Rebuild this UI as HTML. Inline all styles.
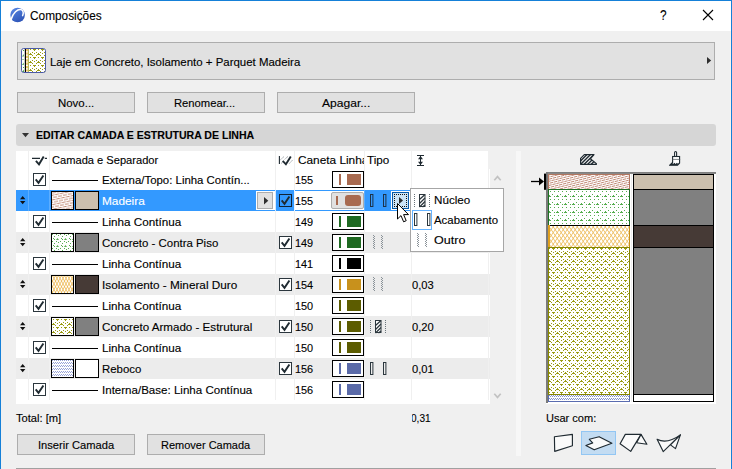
<!DOCTYPE html>
<html><head><meta charset="utf-8">
<style>
html,body{margin:0;padding:0;}
body{width:732px;height:469px;overflow:hidden;background:#f0f0f0;font-family:"Liberation Sans",sans-serif;font-size:12px;color:#000;position:relative;}
.a{position:absolute;}
.t{position:absolute;white-space:nowrap;line-height:14px;height:14px;display:inline-block;transform-origin:0 50%;-webkit-text-stroke:0.12px currentColor;}
.btn{position:absolute;box-sizing:border-box;background:#e1e1e1;border:1px solid #adadad;}
.sep{position:absolute;width:1px;background:#f0f0f0;top:151px;height:249px;}
.row{position:absolute;left:16px;width:474px;height:21px;}
.cb{position:absolute;box-sizing:border-box;width:13px;height:13px;border:1px solid #2b363d;background:#fff;}
.ln{position:absolute;left:52px;width:46px;height:1px;background:#000;}
.sw{position:absolute;box-sizing:border-box;width:24px;height:19px;border:1px solid #000;overflow:hidden;}
.pen{position:absolute;box-sizing:border-box;left:332px;width:32px;height:17px;border:1px solid #000;background:#fff;}
.pen i{position:absolute;left:6px;top:2px;width:2px;height:11px;}
.pen b{position:absolute;left:14px;top:2px;width:14px;height:11px;}
svg{position:absolute;overflow:visible;}
</style></head><body>
<div class="a" style="left:0;top:0;width:732px;height:31px;background:#fff;"></div>
<div class="a" style="left:0;top:0;width:732px;height:1px;background:#1580d8;"></div>
<div class="a" style="left:0;top:0;width:1px;height:469px;background:#1580d8;"></div>
<div class="a" style="left:731px;top:0;width:1px;height:469px;background:#1580d8;"></div>
<div class="a" style="left:730px;top:31px;width:1px;height:438px;background:#f7f4ef;"></div>
<div class="a" style="left:16px;top:468px;width:700px;height:1px;background:#a0a0a0;"></div>
<svg style="left:10px;top:7px" width="16" height="16" viewBox="0 0 16 16"><defs><linearGradient id="ig" x1="0" y1="0" x2="0.6" y2="1"><stop offset="0" stop-color="#5a8ae6"/><stop offset="1" stop-color="#2f56b8"/></linearGradient></defs><circle cx="7.6" cy="8" r="7.3" fill="url(#ig)"/><path d="M1.2 12.2 C3 6 7.5 1.8 11.2 2.6 C13.6 3.4 13.6 6.5 12.6 8.6" fill="none" stroke="#fff" stroke-width="1.5" stroke-linecap="round"/></svg>
<svg style="left:703px;top:10px" width="10" height="10" viewBox="0 0 10 10"><path d="M0 0 L10 10 M10 0 L0 10" stroke="#000" stroke-width="1.1" fill="none"/></svg>
<div class="btn" style="left:17px;top:42px;width:698px;height:38px;"></div>
<svg style="left:21px;top:48px" width="25" height="25" viewBox="0 0 25 25"><rect x="0.5" y="0.5" width="24" height="24" rx="2" fill="#fff"/><rect x="8" y="1" width="16" height="23" fill="url(#p_olive_i)"/><g fill="#4ea64a"><path d="M1 8.5 L2.8 6 V8.5 Z M1 17 L2.8 14.5 V17 Z M1 24 L3 21.5 V24 Z"/><rect x="2" y="2" width="1" height="1"/><rect x="1.5" y="11" width="1" height="1"/><rect x="2" y="19" width="1" height="1"/></g><path d="M4.4 1 V24" stroke="#000" stroke-width="1.2"/><path d="M6 1 V24" stroke="#e8a62c" stroke-width="1.3" stroke-dasharray="2.2 1.2"/><path d="M7.4 1 V24" stroke="#9a9a16" stroke-width="0.8"/><rect x="0.5" y="0.5" width="24" height="24" rx="2.2" fill="none" stroke="#4a5ba6" stroke-width="1"/></svg>
<svg style="left:707px;top:57px" width="4.2" height="7" viewBox="0 0 4.2 7"><path d="M0 0 L4.2 3.5 L0 7 Z" fill="#2e2e2e"/></svg>
<div class="btn" style="left:17px;top:92px;width:118px;height:21px;"></div>
<div class="btn" style="left:147px;top:92px;width:118px;height:21px;"></div>
<div class="btn" style="left:277px;top:92px;width:138px;height:21px;"></div>
<div class="btn" style="left:17px;top:434px;width:118px;height:21px;"></div>
<div class="btn" style="left:147px;top:434px;width:118px;height:21px;"></div>
<div class="a" style="left:16px;top:124px;width:700px;height:22px;background:#d6d6d6;border-radius:3px;"></div>
<svg style="left:22px;top:133px" width="7" height="4" viewBox="0 0 7 4"><path d="M0 0 L7 0 L3.5 4.2 Z" fill="#333"/></svg>
<div class="a" style="left:16px;top:151px;width:474px;height:253px;background:#fff;"></div>
<div class="cb" style="left:33px;top:173px;"><svg style="left:1px;top:1px" width="9" height="9" viewBox="0 0 9 9"><path d="M0.7 4.4 L3.5 7.8 L8.4 0.4" fill="none" stroke="#1f2a31" stroke-width="1.9"/></svg></div>
<div class="ln" style="top:180px;"></div>
<div class="pen" style="top:171px;"><i style="background:#a86a50"></i><b style="background:#a86a50"></b></div>
<div class="row" style="top:190px;background:#3399ff;"></div>
<div class="a" style="left:295px;top:191px;width:69px;height:19px;background:#fff;"></div>
<svg style="left:20px;top:196px" width="5.4" height="8.2" viewBox="0 0 5.4 8.2"><path d="M0 3.3 L2.7 0 L5.4 3.3 Z M0 4.9 L2.7 8.2 L5.4 4.9 Z" fill="#111"/></svg>
<div class="sw" style="left:51px;top:191px;width:23px;background:#fff;"><svg style="left:0;top:0" width="21" height="17"><rect width="21" height="17" fill="url(#p_wood_s)"/></svg></div>
<div class="sw" style="left:75px;top:191px;background:#cbbfae;"></div>
<div class="cb" style="left:279px;top:194px;background:transparent;border-color:#123;"><svg style="left:1px;top:1px" width="9" height="9" viewBox="0 0 9 9"><path d="M0.7 4.4 L3.5 7.8 L8.4 0.4" fill="none" stroke="#1f2a31" stroke-width="1.9"/></svg></div>
<div class="a" style="left:256px;top:191px;width:19px;height:19px;background:#fff;"></div>
<div class="btn" style="left:257px;top:192px;width:16px;height:17px;"></div>
<svg style="left:264px;top:197px" width="4.3" height="7.4" viewBox="0 0 4.3 7.4"><path d="M0 0 L4.3 3.7 L0 7.4 Z" fill="#2e2e2e"/></svg>
<div class="btn" style="left:331px;top:192px;width:33px;height:17px;border-radius:2px;"><i class="a" style="left:4px;top:3px;width:2px;height:9px;background:#a86a50;"></i><b class="a" style="left:13px;top:2px;width:16px;height:11px;border-radius:3px;background:#a86a50;"></b></div>
<svg style="left:370px;top:194px" width="16" height="13" viewBox="0 0 16 13"><rect x="0.5" y="0.5" width="2.4" height="12" fill="none" stroke="#1d3349" stroke-width="1"/><rect x="13.5" y="0.5" width="2.4" height="12" fill="none" stroke="#1d3349" stroke-width="1"/></svg>
<div class="cb" style="left:33px;top:215px;"><svg style="left:1px;top:1px" width="9" height="9" viewBox="0 0 9 9"><path d="M0.7 4.4 L3.5 7.8 L8.4 0.4" fill="none" stroke="#1f2a31" stroke-width="1.9"/></svg></div>
<div class="ln" style="top:222px;"></div>
<div class="pen" style="top:213px;"><i style="background:#1f6a22"></i><b style="background:#1f6a22"></b></div>
<div class="row" style="top:232px;background:#ececec;"></div>
<svg style="left:20px;top:238px" width="5.4" height="8.2" viewBox="0 0 5.4 8.2"><path d="M0 3.3 L2.7 0 L5.4 3.3 Z M0 4.9 L2.7 8.2 L5.4 4.9 Z" fill="#111"/></svg>
<div class="sw" style="left:51px;top:233px;width:23px;background:#fff;"><svg style="left:0;top:0" width="21" height="17"><rect width="21" height="17" fill="url(#p_cgreen_s)"/></svg></div>
<div class="sw" style="left:75px;top:233px;background:#808080;"></div>
<div class="cb" style="left:279px;top:236px;"><svg style="left:1px;top:1px" width="9" height="9" viewBox="0 0 9 9"><path d="M0.7 4.4 L3.5 7.8 L8.4 0.4" fill="none" stroke="#1f2a31" stroke-width="1.9"/></svg></div>
<div class="pen" style="top:234px;"><i style="background:#1f6a22"></i><b style="background:#1f6a22"></b></div>
<svg style="left:370px;top:236px" width="16" height="14" viewBox="0 0 16 14"><g fill="#8a9298" shape-rendering="crispEdges"><rect x="3" y="-1" width="1" height="1"/><rect x="4" y="0" width="1" height="1"/><rect x="3" y="1" width="1" height="1"/><rect x="4" y="2" width="1" height="1"/><rect x="3" y="3" width="1" height="1"/><rect x="4" y="4" width="1" height="1"/><rect x="3" y="5" width="1" height="1"/><rect x="4" y="6" width="1" height="1"/><rect x="3" y="7" width="1" height="1"/><rect x="4" y="8" width="1" height="1"/><rect x="3" y="9" width="1" height="1"/><rect x="4" y="10" width="1" height="1"/><rect x="3" y="11" width="1" height="1"/><rect x="4" y="12" width="1" height="1"/><rect x="11" y="-1" width="1" height="1"/><rect x="12" y="0" width="1" height="1"/><rect x="11" y="1" width="1" height="1"/><rect x="12" y="2" width="1" height="1"/><rect x="11" y="3" width="1" height="1"/><rect x="12" y="4" width="1" height="1"/><rect x="11" y="5" width="1" height="1"/><rect x="12" y="6" width="1" height="1"/><rect x="11" y="7" width="1" height="1"/><rect x="12" y="8" width="1" height="1"/><rect x="11" y="9" width="1" height="1"/><rect x="12" y="10" width="1" height="1"/><rect x="11" y="11" width="1" height="1"/><rect x="12" y="12" width="1" height="1"/></g></svg>
<div class="cb" style="left:33px;top:257px;"><svg style="left:1px;top:1px" width="9" height="9" viewBox="0 0 9 9"><path d="M0.7 4.4 L3.5 7.8 L8.4 0.4" fill="none" stroke="#1f2a31" stroke-width="1.9"/></svg></div>
<div class="ln" style="top:264px;"></div>
<div class="pen" style="top:255px;"><i style="background:#000000"></i><b style="background:#000000"></b></div>
<div class="row" style="top:274px;background:#ececec;"></div>
<svg style="left:20px;top:280px" width="5.4" height="8.2" viewBox="0 0 5.4 8.2"><path d="M0 3.3 L2.7 0 L5.4 3.3 Z M0 4.9 L2.7 8.2 L5.4 4.9 Z" fill="#111"/></svg>
<div class="sw" style="left:51px;top:275px;width:23px;background:#fff;"><svg style="left:0;top:0" width="21" height="17"><path d="M-2.5 -0.5 L-1.0 2.3 L-2.5 5.1 L-1.0 7.9 L-2.5 10.7 L-1.0 13.5 L-2.5 16.3 L-1.0 19.1 M-2.5 -0.5 L-4.0 2.3 L-2.5 5.1 L-4.0 7.9 L-2.5 10.7 L-4.0 13.5 L-2.5 16.3 L-4.0 19.1 M0.5 -0.5 L2.0 2.3 L0.5 5.1 L2.0 7.9 L0.5 10.7 L2.0 13.5 L0.5 16.3 L2.0 19.1 M0.5 -0.5 L-1.0 2.3 L0.5 5.1 L-1.0 7.9 L0.5 10.7 L-1.0 13.5 L0.5 16.3 L-1.0 19.1 M3.5 -0.5 L5.0 2.3 L3.5 5.1 L5.0 7.9 L3.5 10.7 L5.0 13.5 L3.5 16.3 L5.0 19.1 M3.5 -0.5 L2.0 2.3 L3.5 5.1 L2.0 7.9 L3.5 10.7 L2.0 13.5 L3.5 16.3 L2.0 19.1 M6.5 -0.5 L8.0 2.3 L6.5 5.1 L8.0 7.9 L6.5 10.7 L8.0 13.5 L6.5 16.3 L8.0 19.1 M6.5 -0.5 L5.0 2.3 L6.5 5.1 L5.0 7.9 L6.5 10.7 L5.0 13.5 L6.5 16.3 L5.0 19.1 M9.5 -0.5 L11.0 2.3 L9.5 5.1 L11.0 7.9 L9.5 10.7 L11.0 13.5 L9.5 16.3 L11.0 19.1 M9.5 -0.5 L8.0 2.3 L9.5 5.1 L8.0 7.9 L9.5 10.7 L8.0 13.5 L9.5 16.3 L8.0 19.1 M12.5 -0.5 L14.0 2.3 L12.5 5.1 L14.0 7.9 L12.5 10.7 L14.0 13.5 L12.5 16.3 L14.0 19.1 M12.5 -0.5 L11.0 2.3 L12.5 5.1 L11.0 7.9 L12.5 10.7 L11.0 13.5 L12.5 16.3 L11.0 19.1 M15.5 -0.5 L17.0 2.3 L15.5 5.1 L17.0 7.9 L15.5 10.7 L17.0 13.5 L15.5 16.3 L17.0 19.1 M15.5 -0.5 L14.0 2.3 L15.5 5.1 L14.0 7.9 L15.5 10.7 L14.0 13.5 L15.5 16.3 L14.0 19.1 M18.5 -0.5 L20.0 2.3 L18.5 5.1 L20.0 7.9 L18.5 10.7 L20.0 13.5 L18.5 16.3 L20.0 19.1 M18.5 -0.5 L17.0 2.3 L18.5 5.1 L17.0 7.9 L18.5 10.7 L17.0 13.5 L18.5 16.3 L17.0 19.1 M21.5 -0.5 L23.0 2.3 L21.5 5.1 L23.0 7.9 L21.5 10.7 L23.0 13.5 L21.5 16.3 L23.0 19.1 M21.5 -0.5 L20.0 2.3 L21.5 5.1 L20.0 7.9 L21.5 10.7 L20.0 13.5 L21.5 16.3 L20.0 19.1 M24.5 -0.5 L26.0 2.3 L24.5 5.1 L26.0 7.9 L24.5 10.7 L26.0 13.5 L24.5 16.3 L26.0 19.1 M24.5 -0.5 L23.0 2.3 L24.5 5.1 L23.0 7.9 L24.5 10.7 L23.0 13.5 L24.5 16.3 L23.0 19.1 " stroke="#e6a018" stroke-width="0.6" fill="none"/></svg></div>
<div class="sw" style="left:75px;top:275px;background:#463a36;"></div>
<div class="cb" style="left:279px;top:278px;"><svg style="left:1px;top:1px" width="9" height="9" viewBox="0 0 9 9"><path d="M0.7 4.4 L3.5 7.8 L8.4 0.4" fill="none" stroke="#1f2a31" stroke-width="1.9"/></svg></div>
<div class="pen" style="top:276px;"><i style="background:#c8911c"></i><b style="background:#c8911c"></b></div>
<svg style="left:370px;top:278px" width="16" height="14" viewBox="0 0 16 14"><g fill="#8a9298" shape-rendering="crispEdges"><rect x="3" y="-1" width="1" height="1"/><rect x="4" y="0" width="1" height="1"/><rect x="3" y="1" width="1" height="1"/><rect x="4" y="2" width="1" height="1"/><rect x="3" y="3" width="1" height="1"/><rect x="4" y="4" width="1" height="1"/><rect x="3" y="5" width="1" height="1"/><rect x="4" y="6" width="1" height="1"/><rect x="3" y="7" width="1" height="1"/><rect x="4" y="8" width="1" height="1"/><rect x="3" y="9" width="1" height="1"/><rect x="4" y="10" width="1" height="1"/><rect x="3" y="11" width="1" height="1"/><rect x="4" y="12" width="1" height="1"/><rect x="11" y="-1" width="1" height="1"/><rect x="12" y="0" width="1" height="1"/><rect x="11" y="1" width="1" height="1"/><rect x="12" y="2" width="1" height="1"/><rect x="11" y="3" width="1" height="1"/><rect x="12" y="4" width="1" height="1"/><rect x="11" y="5" width="1" height="1"/><rect x="12" y="6" width="1" height="1"/><rect x="11" y="7" width="1" height="1"/><rect x="12" y="8" width="1" height="1"/><rect x="11" y="9" width="1" height="1"/><rect x="12" y="10" width="1" height="1"/><rect x="11" y="11" width="1" height="1"/><rect x="12" y="12" width="1" height="1"/></g></svg>
<div class="cb" style="left:33px;top:299px;"><svg style="left:1px;top:1px" width="9" height="9" viewBox="0 0 9 9"><path d="M0.7 4.4 L3.5 7.8 L8.4 0.4" fill="none" stroke="#1f2a31" stroke-width="1.9"/></svg></div>
<div class="ln" style="top:306px;"></div>
<div class="pen" style="top:297px;"><i style="background:#5c5c00"></i><b style="background:#5c5c00"></b></div>
<div class="row" style="top:316px;background:#ececec;"></div>
<svg style="left:20px;top:322px" width="5.4" height="8.2" viewBox="0 0 5.4 8.2"><path d="M0 3.3 L2.7 0 L5.4 3.3 Z M0 4.9 L2.7 8.2 L5.4 4.9 Z" fill="#111"/></svg>
<div class="sw" style="left:51px;top:317px;width:23px;background:#fff;"><svg style="left:0;top:0" width="21" height="17"><rect width="21" height="17" fill="url(#p_olive_s)"/></svg></div>
<div class="sw" style="left:75px;top:317px;background:#808080;"></div>
<div class="cb" style="left:279px;top:320px;"><svg style="left:1px;top:1px" width="9" height="9" viewBox="0 0 9 9"><path d="M0.7 4.4 L3.5 7.8 L8.4 0.4" fill="none" stroke="#1f2a31" stroke-width="1.9"/></svg></div>
<div class="pen" style="top:318px;"><i style="background:#5c5c00"></i><b style="background:#5c5c00"></b></div>
<svg style="left:370px;top:320px" width="16" height="13" viewBox="0 0 16 13"><path d="M0.5 0 V13 M15.5 0 V13" stroke="#6a747a" stroke-dasharray="1 1" fill="none"/><rect x="5.5" y="0.5" width="5.5" height="12" fill="#fff" stroke="#2b363d"/><path d="M5.5 5.5 L11 0.5 M5.5 9.5 L11 4 M5.5 13 L11 7.5 M8.5 13 L11 11" stroke="#2b363d" stroke-width="1.3" fill="none"/></svg>
<div class="cb" style="left:33px;top:341px;"><svg style="left:1px;top:1px" width="9" height="9" viewBox="0 0 9 9"><path d="M0.7 4.4 L3.5 7.8 L8.4 0.4" fill="none" stroke="#1f2a31" stroke-width="1.9"/></svg></div>
<div class="ln" style="top:348px;"></div>
<div class="pen" style="top:339px;"><i style="background:#5c5c00"></i><b style="background:#5c5c00"></b></div>
<div class="row" style="top:358px;background:#ececec;"></div>
<svg style="left:20px;top:364px" width="5.4" height="8.2" viewBox="0 0 5.4 8.2"><path d="M0 3.3 L2.7 0 L5.4 3.3 Z M0 4.9 L2.7 8.2 L5.4 4.9 Z" fill="#111"/></svg>
<div class="sw" style="left:51px;top:359px;width:23px;background:#fff;"><svg style="left:0;top:0" width="21" height="17"><rect width="21" height="17" fill="url(#p_bluedot_s)"/></svg></div>
<div class="sw" style="left:75px;top:359px;background:#ffffff;"></div>
<div class="cb" style="left:279px;top:362px;"><svg style="left:1px;top:1px" width="9" height="9" viewBox="0 0 9 9"><path d="M0.7 4.4 L3.5 7.8 L8.4 0.4" fill="none" stroke="#1f2a31" stroke-width="1.9"/></svg></div>
<div class="pen" style="top:360px;"><i style="background:#5a6aa8"></i><b style="background:#5a6aa8"></b></div>
<svg style="left:370px;top:362px" width="16" height="13" viewBox="0 0 16 13"><rect x="0.5" y="0.5" width="2.4" height="12" fill="none" stroke="#2b363d" stroke-width="1"/><rect x="13.5" y="0.5" width="2.4" height="12" fill="none" stroke="#2b363d" stroke-width="1"/></svg>
<div class="cb" style="left:33px;top:383px;"><svg style="left:1px;top:1px" width="9" height="9" viewBox="0 0 9 9"><path d="M0.7 4.4 L3.5 7.8 L8.4 0.4" fill="none" stroke="#1f2a31" stroke-width="1.9"/></svg></div>
<div class="ln" style="top:390px;"></div>
<div class="pen" style="top:381px;"><i style="background:#5a6aa8"></i><b style="background:#5a6aa8"></b></div>
<div class="a" style="left:488px;top:151px;width:2px;height:18px;background:#f0f0f0;"></div>
<div class="sep" style="left:28px;"></div>
<div class="sep" style="left:49px;"></div>
<div class="sep" style="left:275px;"></div>
<div class="sep" style="left:294px;"></div>
<div class="sep" style="left:364px;"></div>
<div class="sep" style="left:411px;"></div>
<div class="sep" style="left:488px;"></div>
<div class="a" style="left:28px;top:190px;width:1px;height:21px;background:#5badff;"></div>
<div class="a" style="left:49px;top:190px;width:1px;height:21px;background:#5badff;"></div>
<div class="a" style="left:275px;top:190px;width:1px;height:21px;background:#d4e9ff;"></div>
<div class="a" style="left:294px;top:190px;width:1px;height:21px;background:#eaf4ff;"></div>
<div class="a" style="left:364px;top:190px;width:1px;height:21px;background:#5badff;"></div>
<div class="a" style="left:295px;top:152px;width:69px;height:17px;overflow:hidden;"><span class="t" style="left:2.6px;top:1.4px;font-size:11px;transform:scaleX(1.075);">Caneta Linha</span></div>
<svg style="left:32px;top:154px" width="15" height="12" viewBox="0 0 15 12"><path d="M0 4.4 H8 M12.8 4.4 H15" stroke="#1f2a31" stroke-width="1.2" fill="none"/><path d="M3.9 6.9 L7 10.3 L11.7 2.4" fill="none" stroke="#1f2a31" stroke-width="1.9"/></svg>
<svg style="left:278px;top:154px" width="16" height="12" viewBox="0 0 16 12"><path d="M1.4 2 V10" stroke="#1f2a31" stroke-width="1.1"/><path d="M2.4 5.8 L6.2 2.4 M3.2 9.4 L5.2 7.6 M6.6 5.4 L10 2.4 M11.3 9.6 L14.8 5.8" stroke="#8d9499" stroke-width="0.9" stroke-dasharray="1.2 0.5" fill="none"/><path d="M4.7 6.9 L7.9 10.3 L12.8 2.4" fill="none" stroke="#1f2a31" stroke-width="1.9"/></svg>
<svg style="left:417px;top:155px" width="7" height="11" viewBox="0 0 7 11"><path d="M0 0.5 H7 M0 10.5 H7 M3.5 1 V10" stroke="#1f2a31" stroke-width="1" fill="none"/><path d="M3.5 1 L6 4.2 H1 Z M3.5 10 L6 6.8 H1 Z" fill="#1f2a31"/></svg>
<div class="a" style="left:391px;top:191px;width:19px;height:19px;box-sizing:border-box;background:#cce4f7;border:1px solid #fff;"></div>
<div class="a" style="left:392px;top:192px;width:17px;height:17px;box-sizing:border-box;background:#cce4f7;border:1px solid #0a5aa8;"></div>
<div class="a" style="left:394px;top:194px;width:13px;height:13px;box-sizing:border-box;border:1px dotted #111;"></div>
<svg style="left:399px;top:197px" width="4" height="7" viewBox="0 0 4 7"><path d="M0 0 L4 3.5 L0 7 Z" fill="#2a2a2a"/></svg>
<svg style="left:494px;top:175px" width="7" height="6" viewBox="0 0 7 6"><path d="M0.3 5.2 L3.5 1.6 L6.7 5.2" stroke="#c2c2c2" stroke-width="1.7" fill="none"/></svg>
<svg style="left:494px;top:393px" width="7" height="6" viewBox="0 0 7 6"><path d="M0.3 0.8 L3.5 4.4 L6.7 0.8" stroke="#c2c2c2" stroke-width="1.7" fill="none"/></svg>
<div class="a" style="left:410px;top:188px;width:94px;height:64px;box-sizing:border-box;background:#fff;border:1px solid #a6a6a6;"></div>
<div class="a" style="left:412px;top:210px;width:20px;height:20px;box-sizing:border-box;border:1px solid #66b3ff;background:#fff;"></div>
<svg style="left:414px;top:194px" width="16" height="13" viewBox="0 0 16 13"><path d="M0.5 0 V13 M15.5 0 V13" stroke="#6a747a" stroke-dasharray="1 1" fill="none"/><rect x="5.5" y="0.5" width="5.5" height="12" fill="#fff" stroke="#2b363d"/><path d="M5.5 5.5 L11 0.5 M5.5 9.5 L11 4 M5.5 13 L11 7.5 M8.5 13 L11 11" stroke="#2b363d" stroke-width="1.3" fill="none"/></svg>
<svg style="left:414px;top:213px" width="16" height="13" viewBox="0 0 16 13"><rect x="0.5" y="0.5" width="2.4" height="12" fill="none" stroke="#2b363d" stroke-width="1"/><rect x="13.5" y="0.5" width="2.4" height="12" fill="none" stroke="#2b363d" stroke-width="1"/></svg>
<svg style="left:414px;top:234px" width="16" height="14" viewBox="0 0 16 14"><g fill="#8a9298" shape-rendering="crispEdges"><rect x="3" y="-1" width="1" height="1"/><rect x="4" y="0" width="1" height="1"/><rect x="3" y="1" width="1" height="1"/><rect x="4" y="2" width="1" height="1"/><rect x="3" y="3" width="1" height="1"/><rect x="4" y="4" width="1" height="1"/><rect x="3" y="5" width="1" height="1"/><rect x="4" y="6" width="1" height="1"/><rect x="3" y="7" width="1" height="1"/><rect x="4" y="8" width="1" height="1"/><rect x="3" y="9" width="1" height="1"/><rect x="4" y="10" width="1" height="1"/><rect x="3" y="11" width="1" height="1"/><rect x="4" y="12" width="1" height="1"/><rect x="11" y="-1" width="1" height="1"/><rect x="12" y="0" width="1" height="1"/><rect x="11" y="1" width="1" height="1"/><rect x="12" y="2" width="1" height="1"/><rect x="11" y="3" width="1" height="1"/><rect x="12" y="4" width="1" height="1"/><rect x="11" y="5" width="1" height="1"/><rect x="12" y="6" width="1" height="1"/><rect x="11" y="7" width="1" height="1"/><rect x="12" y="8" width="1" height="1"/><rect x="11" y="9" width="1" height="1"/><rect x="12" y="10" width="1" height="1"/><rect x="11" y="11" width="1" height="1"/><rect x="12" y="12" width="1" height="1"/></g></svg>
<svg style="left:397px;top:203px" width="13" height="20" viewBox="0 0 13 20"><path d="M0.5 0.5 V16 L4 12.6 L6.6 18.8 L9.2 17.7 L6.6 11.6 H11.5 Z" fill="#fff" stroke="#000" stroke-width="1"/></svg>
<div class="a" style="left:412px;top:408px;width:30px;height:20px;overflow:hidden;"><span class="t" style="left:-1.5px;top:3.4px;font-size:11px;transform:scaleX(0.915);">0,31</span></div>
<div class="a" style="left:516px;top:151px;width:5px;height:305px;background:#f7f7f7;"></div>
<div class="a" style="left:546px;top:172px;width:170px;height:232px;background:#fff;"></div>
<div class="a" style="left:546px;top:172px;width:170px;height:2px;background:linear-gradient(#7a7a7a,#8c8c8c);"></div>
<div class="a" style="left:546px;top:172px;width:2px;height:231px;background:#7a7a7a;"></div>
<div class="a" style="left:631px;top:174px;width:1px;height:228px;background:#ededed;"></div>
<svg style="left:0;top:0" width="0" height="0"><defs>
<pattern id="p_wood" width="8" height="2" x="1" y="1" patternUnits="userSpaceOnUse"><g fill="#b5735a" shape-rendering="crispEdges"><rect x="0" y="1" width="3" height="1"/><rect x="4" y="0" width="3" height="1"/></g></pattern>
<pattern id="p_wood_s" width="10" height="4.6" patternUnits="userSpaceOnUse" patternTransform="rotate(-12)"><path d="M0 1 H4 M5 1 H9 M-2.5 3.3 H1.5 M2.5 3.3 H6.5 M7.5 3.3 H11.5" stroke="#b5735a" stroke-width="0.85"/></pattern>
<pattern id="p_cgreen" width="8" height="8" patternUnits="userSpaceOnUse"><g fill="#55ad4e" shape-rendering="crispEdges"><rect x="2" y="1" width="1" height="1"/><rect x="6" y="1" width="1" height="1"/><rect x="4" y="4" width="1" height="1"/><rect x="6" y="6" width="1" height="1"/><rect x="1" y="5" width="1" height="1"/><rect x="0" y="6" width="3" height="1"/></g></pattern>
<pattern id="p_cgreen_s" width="8" height="7" x="2" y="1" patternUnits="userSpaceOnUse"><g fill="#58ad50" shape-rendering="crispEdges"><path d="M2 5 L3.5 3 L5 5 Z" shape-rendering="auto"/><rect x="0" y="1" width="1" height="1"/><rect x="4" y="0" width="1" height="1"/><rect x="7" y="3" width="1" height="1"/><rect x="0" y="4" width="1" height="1"/><rect x="6" y="6" width="1" height="1"/><rect x="2" y="6" width="1" height="1"/></g></pattern>
<pattern id="p_orange" width="4" height="5.8" x="1.2" y="52.8" patternUnits="userSpaceOnUse"><path d="M0 0 L2 2.9 L0 5.8 M4 0 L2 2.9 L4 5.8" stroke="#e8a420" stroke-width="0.85" fill="none"/></pattern>
<pattern id="p_orange_s" width="3" height="5.6" patternUnits="userSpaceOnUse"><path d="M0 0 L1.5 2.8 L0 5.6 M3 0 L1.5 2.8 L3 5.6" stroke="#eaa21c" stroke-width="0.9" fill="none"/></pattern>
<pattern id="p_olive" width="8" height="8" patternUnits="userSpaceOnUse"><g fill="#9b9b12" shape-rendering="crispEdges"><rect x="4" y="2" width="3" height="1"/><rect x="5" y="3" width="1" height="1"/><rect x="1" y="2" width="1" height="1"/><rect x="3" y="5" width="1" height="1"/><rect x="7" y="5" width="1" height="1"/><rect x="1" y="6" width="1" height="1"/><rect x="0" y="7" width="3" height="1"/><rect x="5" y="6" width="1" height="1"/><rect x="3" y="0" width="1" height="1"/><rect x="7" y="0" width="1" height="1"/></g></pattern>
<pattern id="p_olive_s" width="8" height="8" x="0" y="-1" patternUnits="userSpaceOnUse"><g fill="#9b9b12" shape-rendering="crispEdges"><rect x="4" y="2" width="3" height="1"/><rect x="5" y="3" width="1" height="1"/><rect x="1" y="2" width="1" height="1"/><rect x="3" y="5" width="1" height="1"/><rect x="7" y="5" width="1" height="1"/><rect x="1" y="6" width="1" height="1"/><rect x="0" y="7" width="3" height="1"/><rect x="5" y="6" width="1" height="1"/><rect x="3" y="0" width="1" height="1"/><rect x="7" y="0" width="1" height="1"/></g></pattern>
<pattern id="p_olive_i" width="8" height="8" x="0" y="-1" patternUnits="userSpaceOnUse"><g fill="#9b9b12" shape-rendering="crispEdges"><rect x="4" y="2" width="3" height="1"/><rect x="5" y="3" width="1" height="1"/><rect x="1" y="2" width="1" height="1"/><rect x="3" y="5" width="1" height="1"/><rect x="7" y="5" width="1" height="1"/><rect x="1" y="6" width="1" height="1"/><rect x="0" y="7" width="3" height="1"/><rect x="5" y="6" width="1" height="1"/><rect x="3" y="0" width="1" height="1"/><rect x="7" y="0" width="1" height="1"/></g></pattern>
<pattern id="p_bluedot" width="2" height="3" x="0" y="222" patternUnits="userSpaceOnUse"><g shape-rendering="crispEdges" fill="#8592cc"><rect x="0" y="0" width="1" height="1"/><rect x="1" y="1.5" width="1" height="1"/></g></pattern>
<pattern id="p_bluedot_s" width="2" height="3" patternUnits="userSpaceOnUse"><g shape-rendering="crispEdges" fill="#97a3d8"><rect x="0" y="0" width="1" height="1"/><rect x="1" y="1.5" width="1" height="1"/></g></pattern>
</defs></svg>
<svg style="left:548px;top:174px" width="82" height="228" viewBox="0 0 82 228"><defs><clipPath id="wc"><rect x="1" y="1" width="80" height="14"/></clipPath></defs><g clip-path="url(#wc)" stroke="#b06a50" stroke-width="0.8" stroke-dasharray="3.4 0.7" fill="none"><path d="M0 1.20 L82 -19.30" stroke-dashoffset="0.00"/><path d="M0 3.30 L82 -17.20" stroke-dashoffset="1.55"/><path d="M0 5.40 L82 -15.10" stroke-dashoffset="3.10"/><path d="M0 7.50 L82 -13.00" stroke-dashoffset="0.55"/><path d="M0 9.60 L82 -10.90" stroke-dashoffset="2.10"/><path d="M0 11.70 L82 -8.80" stroke-dashoffset="3.65"/><path d="M0 13.80 L82 -6.70" stroke-dashoffset="1.10"/><path d="M0 15.90 L82 -4.60" stroke-dashoffset="2.65"/><path d="M0 18.00 L82 -2.50" stroke-dashoffset="0.10"/><path d="M0 20.10 L82 -0.40" stroke-dashoffset="1.65"/><path d="M0 22.20 L82 1.70" stroke-dashoffset="3.20"/><path d="M0 24.30 L82 3.80" stroke-dashoffset="0.65"/><path d="M0 26.40 L82 5.90" stroke-dashoffset="2.20"/><path d="M0 28.50 L82 8.00" stroke-dashoffset="3.75"/><path d="M0 30.60 L82 10.10" stroke-dashoffset="1.20"/><path d="M0 32.70 L82 12.20" stroke-dashoffset="2.75"/><path d="M0 34.80 L82 14.30" stroke-dashoffset="0.20"/><path d="M0 36.90 L82 16.40" stroke-dashoffset="1.75"/><path d="M0 39.00 L82 18.50" stroke-dashoffset="3.30"/></g><rect x="0" y="15" width="82" height="36" fill="url(#p_cgreen)"/><defs><clipPath id="oc"><rect x="2" y="52" width="79" height="21"/></clipPath></defs><g clip-path="url(#oc)"><path d="M-2.8 47.0 L-0.8 49.9 L-2.8 52.8 L-0.8 55.7 L-2.8 58.6 L-0.8 61.5 L-2.8 64.4 L-0.8 67.3 L-2.8 70.2 L-0.8 73.1 L-2.8 76.0 M-2.8 47.0 L-4.8 49.9 L-2.8 52.8 L-4.8 55.7 L-2.8 58.6 L-4.8 61.5 L-2.8 64.4 L-4.8 67.3 L-2.8 70.2 L-4.8 73.1 L-2.8 76.0 M1.2 47.0 L3.2 49.9 L1.2 52.8 L3.2 55.7 L1.2 58.6 L3.2 61.5 L1.2 64.4 L3.2 67.3 L1.2 70.2 L3.2 73.1 L1.2 76.0 M1.2 47.0 L-0.8 49.9 L1.2 52.8 L-0.8 55.7 L1.2 58.6 L-0.8 61.5 L1.2 64.4 L-0.8 67.3 L1.2 70.2 L-0.8 73.1 L1.2 76.0 M5.2 47.0 L7.2 49.9 L5.2 52.8 L7.2 55.7 L5.2 58.6 L7.2 61.5 L5.2 64.4 L7.2 67.3 L5.2 70.2 L7.2 73.1 L5.2 76.0 M5.2 47.0 L3.2 49.9 L5.2 52.8 L3.2 55.7 L5.2 58.6 L3.2 61.5 L5.2 64.4 L3.2 67.3 L5.2 70.2 L3.2 73.1 L5.2 76.0 M9.2 47.0 L11.2 49.9 L9.2 52.8 L11.2 55.7 L9.2 58.6 L11.2 61.5 L9.2 64.4 L11.2 67.3 L9.2 70.2 L11.2 73.1 L9.2 76.0 M9.2 47.0 L7.2 49.9 L9.2 52.8 L7.2 55.7 L9.2 58.6 L7.2 61.5 L9.2 64.4 L7.2 67.3 L9.2 70.2 L7.2 73.1 L9.2 76.0 M13.2 47.0 L15.2 49.9 L13.2 52.8 L15.2 55.7 L13.2 58.6 L15.2 61.5 L13.2 64.4 L15.2 67.3 L13.2 70.2 L15.2 73.1 L13.2 76.0 M13.2 47.0 L11.2 49.9 L13.2 52.8 L11.2 55.7 L13.2 58.6 L11.2 61.5 L13.2 64.4 L11.2 67.3 L13.2 70.2 L11.2 73.1 L13.2 76.0 M17.2 47.0 L19.2 49.9 L17.2 52.8 L19.2 55.7 L17.2 58.6 L19.2 61.5 L17.2 64.4 L19.2 67.3 L17.2 70.2 L19.2 73.1 L17.2 76.0 M17.2 47.0 L15.2 49.9 L17.2 52.8 L15.2 55.7 L17.2 58.6 L15.2 61.5 L17.2 64.4 L15.2 67.3 L17.2 70.2 L15.2 73.1 L17.2 76.0 M21.2 47.0 L23.2 49.9 L21.2 52.8 L23.2 55.7 L21.2 58.6 L23.2 61.5 L21.2 64.4 L23.2 67.3 L21.2 70.2 L23.2 73.1 L21.2 76.0 M21.2 47.0 L19.2 49.9 L21.2 52.8 L19.2 55.7 L21.2 58.6 L19.2 61.5 L21.2 64.4 L19.2 67.3 L21.2 70.2 L19.2 73.1 L21.2 76.0 M25.2 47.0 L27.2 49.9 L25.2 52.8 L27.2 55.7 L25.2 58.6 L27.2 61.5 L25.2 64.4 L27.2 67.3 L25.2 70.2 L27.2 73.1 L25.2 76.0 M25.2 47.0 L23.2 49.9 L25.2 52.8 L23.2 55.7 L25.2 58.6 L23.2 61.5 L25.2 64.4 L23.2 67.3 L25.2 70.2 L23.2 73.1 L25.2 76.0 M29.2 47.0 L31.2 49.9 L29.2 52.8 L31.2 55.7 L29.2 58.6 L31.2 61.5 L29.2 64.4 L31.2 67.3 L29.2 70.2 L31.2 73.1 L29.2 76.0 M29.2 47.0 L27.2 49.9 L29.2 52.8 L27.2 55.7 L29.2 58.6 L27.2 61.5 L29.2 64.4 L27.2 67.3 L29.2 70.2 L27.2 73.1 L29.2 76.0 M33.2 47.0 L35.2 49.9 L33.2 52.8 L35.2 55.7 L33.2 58.6 L35.2 61.5 L33.2 64.4 L35.2 67.3 L33.2 70.2 L35.2 73.1 L33.2 76.0 M33.2 47.0 L31.2 49.9 L33.2 52.8 L31.2 55.7 L33.2 58.6 L31.2 61.5 L33.2 64.4 L31.2 67.3 L33.2 70.2 L31.2 73.1 L33.2 76.0 M37.2 47.0 L39.2 49.9 L37.2 52.8 L39.2 55.7 L37.2 58.6 L39.2 61.5 L37.2 64.4 L39.2 67.3 L37.2 70.2 L39.2 73.1 L37.2 76.0 M37.2 47.0 L35.2 49.9 L37.2 52.8 L35.2 55.7 L37.2 58.6 L35.2 61.5 L37.2 64.4 L35.2 67.3 L37.2 70.2 L35.2 73.1 L37.2 76.0 M41.2 47.0 L43.2 49.9 L41.2 52.8 L43.2 55.7 L41.2 58.6 L43.2 61.5 L41.2 64.4 L43.2 67.3 L41.2 70.2 L43.2 73.1 L41.2 76.0 M41.2 47.0 L39.2 49.9 L41.2 52.8 L39.2 55.7 L41.2 58.6 L39.2 61.5 L41.2 64.4 L39.2 67.3 L41.2 70.2 L39.2 73.1 L41.2 76.0 M45.2 47.0 L47.2 49.9 L45.2 52.8 L47.2 55.7 L45.2 58.6 L47.2 61.5 L45.2 64.4 L47.2 67.3 L45.2 70.2 L47.2 73.1 L45.2 76.0 M45.2 47.0 L43.2 49.9 L45.2 52.8 L43.2 55.7 L45.2 58.6 L43.2 61.5 L45.2 64.4 L43.2 67.3 L45.2 70.2 L43.2 73.1 L45.2 76.0 M49.2 47.0 L51.2 49.9 L49.2 52.8 L51.2 55.7 L49.2 58.6 L51.2 61.5 L49.2 64.4 L51.2 67.3 L49.2 70.2 L51.2 73.1 L49.2 76.0 M49.2 47.0 L47.2 49.9 L49.2 52.8 L47.2 55.7 L49.2 58.6 L47.2 61.5 L49.2 64.4 L47.2 67.3 L49.2 70.2 L47.2 73.1 L49.2 76.0 M53.2 47.0 L55.2 49.9 L53.2 52.8 L55.2 55.7 L53.2 58.6 L55.2 61.5 L53.2 64.4 L55.2 67.3 L53.2 70.2 L55.2 73.1 L53.2 76.0 M53.2 47.0 L51.2 49.9 L53.2 52.8 L51.2 55.7 L53.2 58.6 L51.2 61.5 L53.2 64.4 L51.2 67.3 L53.2 70.2 L51.2 73.1 L53.2 76.0 M57.2 47.0 L59.2 49.9 L57.2 52.8 L59.2 55.7 L57.2 58.6 L59.2 61.5 L57.2 64.4 L59.2 67.3 L57.2 70.2 L59.2 73.1 L57.2 76.0 M57.2 47.0 L55.2 49.9 L57.2 52.8 L55.2 55.7 L57.2 58.6 L55.2 61.5 L57.2 64.4 L55.2 67.3 L57.2 70.2 L55.2 73.1 L57.2 76.0 M61.2 47.0 L63.2 49.9 L61.2 52.8 L63.2 55.7 L61.2 58.6 L63.2 61.5 L61.2 64.4 L63.2 67.3 L61.2 70.2 L63.2 73.1 L61.2 76.0 M61.2 47.0 L59.2 49.9 L61.2 52.8 L59.2 55.7 L61.2 58.6 L59.2 61.5 L61.2 64.4 L59.2 67.3 L61.2 70.2 L59.2 73.1 L61.2 76.0 M65.2 47.0 L67.2 49.9 L65.2 52.8 L67.2 55.7 L65.2 58.6 L67.2 61.5 L65.2 64.4 L67.2 67.3 L65.2 70.2 L67.2 73.1 L65.2 76.0 M65.2 47.0 L63.2 49.9 L65.2 52.8 L63.2 55.7 L65.2 58.6 L63.2 61.5 L65.2 64.4 L63.2 67.3 L65.2 70.2 L63.2 73.1 L65.2 76.0 M69.2 47.0 L71.2 49.9 L69.2 52.8 L71.2 55.7 L69.2 58.6 L71.2 61.5 L69.2 64.4 L71.2 67.3 L69.2 70.2 L71.2 73.1 L69.2 76.0 M69.2 47.0 L67.2 49.9 L69.2 52.8 L67.2 55.7 L69.2 58.6 L67.2 61.5 L69.2 64.4 L67.2 67.3 L69.2 70.2 L67.2 73.1 L69.2 76.0 M73.2 47.0 L75.2 49.9 L73.2 52.8 L75.2 55.7 L73.2 58.6 L75.2 61.5 L73.2 64.4 L75.2 67.3 L73.2 70.2 L75.2 73.1 L73.2 76.0 M73.2 47.0 L71.2 49.9 L73.2 52.8 L71.2 55.7 L73.2 58.6 L71.2 61.5 L73.2 64.4 L71.2 67.3 L73.2 70.2 L71.2 73.1 L73.2 76.0 M77.2 47.0 L79.2 49.9 L77.2 52.8 L79.2 55.7 L77.2 58.6 L79.2 61.5 L77.2 64.4 L79.2 67.3 L77.2 70.2 L79.2 73.1 L77.2 76.0 M77.2 47.0 L75.2 49.9 L77.2 52.8 L75.2 55.7 L77.2 58.6 L75.2 61.5 L77.2 64.4 L75.2 67.3 L77.2 70.2 L75.2 73.1 L77.2 76.0 M81.2 47.0 L83.2 49.9 L81.2 52.8 L83.2 55.7 L81.2 58.6 L83.2 61.5 L81.2 64.4 L83.2 67.3 L81.2 70.2 L83.2 73.1 L81.2 76.0 M81.2 47.0 L79.2 49.9 L81.2 52.8 L79.2 55.7 L81.2 58.6 L79.2 61.5 L81.2 64.4 L79.2 67.3 L81.2 70.2 L79.2 73.1 L81.2 76.0 M85.2 47.0 L87.2 49.9 L85.2 52.8 L87.2 55.7 L85.2 58.6 L87.2 61.5 L85.2 64.4 L87.2 67.3 L85.2 70.2 L87.2 73.1 L85.2 76.0 M85.2 47.0 L83.2 49.9 L85.2 52.8 L83.2 55.7 L85.2 58.6 L83.2 61.5 L85.2 64.4 L83.2 67.3 L85.2 70.2 L83.2 73.1 L85.2 76.0 M89.2 47.0 L91.2 49.9 L89.2 52.8 L91.2 55.7 L89.2 58.6 L91.2 61.5 L89.2 64.4 L91.2 67.3 L89.2 70.2 L91.2 73.1 L89.2 76.0 M89.2 47.0 L87.2 49.9 L89.2 52.8 L87.2 55.7 L89.2 58.6 L87.2 61.5 L89.2 64.4 L87.2 67.3 L89.2 70.2 L87.2 73.1 L89.2 76.0 " stroke="#e6a018" stroke-width="0.62" fill="none"/></g><rect x="0" y="73" width="82" height="148" fill="url(#p_olive)"/><rect x="0" y="221" width="82" height="7" fill="url(#p_bluedot)"/><g shape-rendering="crispEdges"><path d="M0.5 15 V0.5 H81.5 V15" fill="none" stroke="#b27660" stroke-width="1"/><path d="M0.5 51 V15.5 H81.5 V51" fill="none" stroke="#1d6f24" stroke-width="1"/><rect x="0" y="51" width="2" height="22" fill="#e0a020"/><rect x="81" y="51" width="1" height="22" fill="#c8911c"/><rect x="2" y="51" width="80" height="1" fill="#000"/><path d="M0.5 73 V220.5 H81.5 V73.5 H1" fill="none" stroke="#868600" stroke-width="1"/><path d="M0.5 221 V227.5 H81.5 V221" fill="none" stroke="#5a6cb0" stroke-width="1"/></g></svg>
<div class="a" style="left:633px;top:174px;width:81px;height:228px;background:#000;"></div>
<div class="a" style="left:634px;top:175px;width:79px;height:14px;background:#cbbfae;"></div>
<div class="a" style="left:634px;top:190px;width:79px;height:35px;background:#808080;"></div>
<div class="a" style="left:634px;top:226px;width:79px;height:21px;background:#463a36;"></div>
<div class="a" style="left:634px;top:248px;width:79px;height:146px;background:#808080;"></div>
<div class="a" style="left:634px;top:395px;width:79px;height:6px;background:#ffffff;"></div>
<svg style="left:531px;top:173px" width="16" height="18" viewBox="0 0 16 18"><path d="M0 8.5 H10" stroke="#000" stroke-width="1.3" fill="none"/><path d="M8 4.6 L13 8.5 L8 12.4 Z" fill="#000"/><rect x="13" y="0.6" width="2.1" height="16.2" fill="#000"/></svg>
<svg style="left:580px;top:154px" width="17" height="11" viewBox="0 0 17 11"><defs><clipPath id="hc"><path d="M0.6 10.3 V4.3 L4.3 0.6 H14 L10.3 4.8 L16.4 9.6 V10.3 Z"/></clipPath></defs><path d="M0.6 10.3 V4.3 L4.3 0.6 H14 L10.3 4.8 L16.4 9.6 V10.3 Z" fill="#f4f4f4"/><g clip-path="url(#hc)"><path d="M-3 10.5 L7.5 0 M0.5 10.5 L11 0 M4 10.5 L14.5 0 M7.5 10.5 L18 0 M11 10.5 L21.5 0" stroke="#1f2a31" stroke-width="1.4"/></g><path d="M0.6 10.3 V4.3 L4.3 0.6 H14 L10.3 4.8 L16.4 9.6 V10.3 Z" fill="none" stroke="#1f2a31" stroke-width="1.2" stroke-linejoin="round"/></svg>
<svg style="left:669px;top:151px" width="12" height="15" viewBox="0 0 12 15"><path d="M5.6 5.5 V1.5 Q5.6 0.5 6.6 0.5 Q7.6 0.5 7.6 1.5 V5.5" fill="#fff" stroke="#1f2a31" stroke-width="1.1"/><rect x="3.6" y="5.5" width="7" height="3" fill="#fff" stroke="#1f2a31" stroke-width="1.1"/><path d="M3.6 8.5 V11.5 L0.5 14.3 H8.4 L10.6 12 V8.5" fill="#fff" stroke="#1f2a31" stroke-width="1.1" stroke-linejoin="round"/><path d="M0.5 14.3 L3.2 11.8 L4 13 L5.6 11.8 L6.4 13 L8 11.8 L8.8 12.8 L10 11.8 L8.4 14.3 Z" fill="#1f2a31"/></svg>
<div class="a" style="left:581px;top:431px;width:35px;height:24px;box-sizing:border-box;background:#c3dcf2;border:1px solid #92c6f3;"></div>
<svg style="left:540px;top:405px" width="160" height="64" viewBox="0 0 160 64"><path d="M14.4 31.7 L32.4 29.4 L32.4 40.7 L14.7 46.4 Z" fill="#fafafa" stroke="#1f2a31" stroke-width="1.15" stroke-linejoin="round"/><path d="M49.3 34.3 L59.1 31.7 L71.9 38.2 L54.2 44.8 L45.9 40.5 L52.7 37.9 Z" fill="#fafafa" stroke="#1f2a31" stroke-width="1.15" stroke-linejoin="round"/><path d="M85.3 29.4 L101 29.4 L90.7 46.4 L80.1 38.7 Z" fill="#fafafa" stroke="#1f2a31" stroke-width="1.15" stroke-linejoin="round"/><path d="M101 29.4 L106.9 39.2 L96.6 37.7 Z" fill="#fafafa" stroke="#1f2a31" stroke-width="1.15" stroke-linejoin="round"/><path d="M117.1 34.3 Q127 39.5 140.4 29.9 L123.2 46.6 Z" fill="#fafafa" stroke="#1f2a31" stroke-width="1.15" stroke-linejoin="round"/><path d="M140.4 29.9 L135.5 43.6 L130.5 39.9 Z" fill="#fafafa" stroke="#1f2a31" stroke-width="1.15" stroke-linejoin="round"/></svg>
<span class="t" style="left:30.41px;top:9.00px;color:#000;font-size:12px;transform:scaleX(0.9860);">Composições</span>
<span class="t" style="left:659.89px;top:8.00px;color:#000;font-size:14px;transform:scaleX(0.8489);">?</span>
<span class="t" style="left:50.38px;top:54.90px;color:#000;font-size:11px;transform:scaleX(1.0401);">Laje em Concreto, Isolamento + Parquet Madeira</span>
<span class="t" style="left:57.88px;top:96.40px;color:#000;font-size:11px;transform:scaleX(1.0398);">Novo...</span>
<span class="t" style="left:174.39px;top:96.40px;color:#000;font-size:11px;transform:scaleX(1.0218);">Renomear...</span>
<span class="t" style="left:321.84px;top:96.40px;color:#000;font-size:11px;transform:scaleX(1.0969);">Apagar...</span>
<span class="t" style="left:37.89px;top:437.90px;color:#000;font-size:11px;transform:scaleX(1.0135);">Inserir Camada</span>
<span class="t" style="left:161.40px;top:437.90px;color:#000;font-size:11px;transform:scaleX(0.9993);">Remover Camada</span>
<span class="t" style="left:35.92px;top:128.40px;color:#000;font-size:11px;transform:scaleX(0.9588);font-weight:bold;">EDITAR CAMADA E ESTRUTURA DE LINHA</span>
<span class="t" style="left:101.68px;top:172.90px;color:#000;font-size:11px;transform:scaleX(1.0369);">Externa/Topo: Linha Contín...</span>
<span class="t" style="left:295.41px;top:172.90px;color:#000;font-size:11px;transform:scaleX(0.9907);">155</span>
<span class="t" style="left:101.65px;top:193.90px;color:#fff;font-size:11px;transform:scaleX(1.0765);">Madeira</span>
<span class="t" style="left:295.41px;top:193.90px;color:#000;font-size:11px;transform:scaleX(0.9907);">155</span>
<span class="t" style="left:101.66px;top:214.90px;color:#000;font-size:11px;transform:scaleX(1.0623);">Linha Contínua</span>
<span class="t" style="left:295.41px;top:214.90px;color:#000;font-size:11px;transform:scaleX(0.9907);">149</span>
<span class="t" style="left:101.68px;top:235.90px;color:#000;font-size:11px;transform:scaleX(1.0389);">Concreto - Contra Piso</span>
<span class="t" style="left:295.41px;top:235.90px;color:#000;font-size:11px;transform:scaleX(0.9907);">149</span>
<span class="t" style="left:101.66px;top:256.90px;color:#000;font-size:11px;transform:scaleX(1.0623);">Linha Contínua</span>
<span class="t" style="left:295.41px;top:256.90px;color:#000;font-size:11px;transform:scaleX(0.9907);">141</span>
<span class="t" style="left:101.66px;top:277.90px;color:#000;font-size:11px;transform:scaleX(1.0689);">Isolamento - Mineral Duro</span>
<span class="t" style="left:295.41px;top:277.90px;color:#000;font-size:11px;transform:scaleX(0.9907);">154</span>
<span class="t" style="left:411.69px;top:277.90px;color:#000;font-size:11px;transform:scaleX(1.0138);">0,03</span>
<span class="t" style="left:101.66px;top:298.90px;color:#000;font-size:11px;transform:scaleX(1.0623);">Linha Contínua</span>
<span class="t" style="left:295.41px;top:298.90px;color:#000;font-size:11px;transform:scaleX(0.9907);">150</span>
<span class="t" style="left:101.67px;top:319.90px;color:#000;font-size:11px;transform:scaleX(1.0548);">Concreto Armado - Estrutural</span>
<span class="t" style="left:295.41px;top:319.90px;color:#000;font-size:11px;transform:scaleX(0.9907);">150</span>
<span class="t" style="left:411.69px;top:319.90px;color:#000;font-size:11px;transform:scaleX(1.0138);">0,20</span>
<span class="t" style="left:101.66px;top:340.90px;color:#000;font-size:11px;transform:scaleX(1.0623);">Linha Contínua</span>
<span class="t" style="left:295.41px;top:340.90px;color:#000;font-size:11px;transform:scaleX(0.9907);">150</span>
<span class="t" style="left:101.68px;top:361.90px;color:#000;font-size:11px;transform:scaleX(1.0348);">Reboco</span>
<span class="t" style="left:295.41px;top:361.90px;color:#000;font-size:11px;transform:scaleX(0.9907);">156</span>
<span class="t" style="left:411.69px;top:361.90px;color:#000;font-size:11px;transform:scaleX(1.0138);">0,01</span>
<span class="t" style="left:101.67px;top:382.90px;color:#000;font-size:11px;transform:scaleX(1.0500);">Interna/Base: Linha Contínua</span>
<span class="t" style="left:295.41px;top:382.90px;color:#000;font-size:11px;transform:scaleX(0.9907);">156</span>
<span class="t" style="left:51.99px;top:153.40px;color:#000;font-size:11px;transform:scaleX(1.0097);">Camada e Separador</span>
<span class="t" style="left:366.56px;top:153.40px;color:#000;font-size:11px;transform:scaleX(1.0606);">Tipo</span>
<span class="t" style="left:433.86px;top:193.40px;color:#000;font-size:11px;transform:scaleX(1.0590);">Núcleo</span>
<span class="t" style="left:433.88px;top:213.40px;color:#000;font-size:11px;transform:scaleX(1.0369);">Acabamento</span>
<span class="t" style="left:433.82px;top:233.40px;color:#000;font-size:11px;transform:scaleX(1.1400);">Outro</span>
<span class="t" style="left:15.89px;top:411.40px;color:#000;font-size:11px;transform:scaleX(1.0132);">Total: [m]</span>
<span class="t" style="left:545.90px;top:411.40px;color:#000;font-size:11px;transform:scaleX(1.0015);">Usar com:</span>
</body></html>
